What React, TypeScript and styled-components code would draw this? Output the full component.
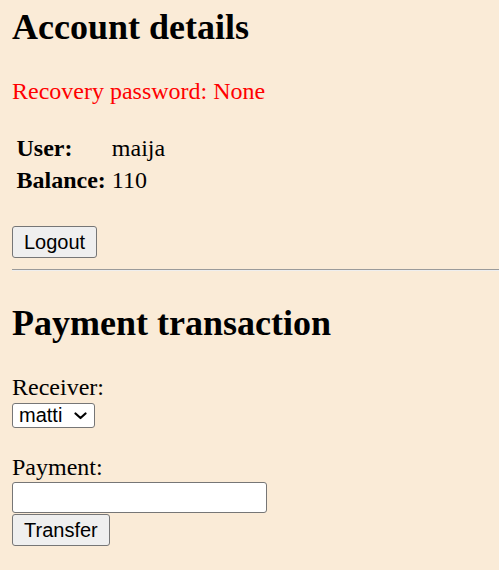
import React from "react";
import styled, { createGlobalStyle } from "styled-components";

const GlobalStyle = createGlobalStyle`
  html, body {
    margin: 0;
    padding: 0;
    background: #faebd7;
  }
  body {
    font-family: "Liberation Serif", "Times New Roman", serif;
    font-size: 24px;
    color: #000;
  }
`;

const Page = styled.div`
  padding: 7px 0 24px 12px;
  display: flex;
  flex-direction: column;
  align-items: stretch;
`;

const Section = styled.section`
  display: flex;
  flex-direction: column;
  align-items: flex-start;
`;

const Title = styled.h1`
  margin: 0 0 30px;
  font-size: 36px;
  line-height: 41px;
  font-weight: bold;
`;

const Warning = styled.p`
  margin: 0 0 25px;
  color: #ff0000;
  font-size: 24px;
  line-height: 27px;
`;

const InfoTable = styled.table`
  border-spacing: 3px;
  margin: 0 0 29px;
  font-size: 24px;
  line-height: 26px;
`;

const Th = styled.th`
  padding: 1.5px;
  text-align: left;
  font-weight: bold;
`;

const Td = styled.td`
  padding: 1.5px;
`;

const Button = styled.button`
  font-family: "Liberation Sans", Arial, sans-serif;
  font-size: 20px;
  line-height: 23px;
  height: 32px;
  padding: 0 11px;
  margin: 0;
  background: #efefef;
  color: #000;
  border: 1px solid #767676;
  border-radius: 3px;
  box-sizing: border-box;
`;

const Divider = styled.hr`
  margin: 11px 0 32px;
  height: 0;
  border: none;
  border-top: 1px solid #9a9a9a;
  border-bottom: 1px solid #eeeeee;
`;

const Form = styled.form`
  display: flex;
  flex-direction: column;
  align-items: flex-start;
`;

const Label = styled.label<{ $gap: number }>`
  font-size: 24px;
  line-height: 27px;
  margin-bottom: ${(p) => p.$gap}px;
`;

const SelectWrap = styled.div`
  position: relative;
  display: inline-flex;
  margin-bottom: 26px;
`;

const Select = styled.select`
  appearance: none;
  -webkit-appearance: none;
  font-family: "Liberation Sans", Arial, sans-serif;
  font-size: 20px;
  width: 83px;
  height: 25px;
  padding: 0 0 0 6px;
  margin: 0;
  background: #ffffff;
  color: #000;
  border: 1px solid #767676;
  border-radius: 3px;
  box-sizing: border-box;
  line-height: 23px;
`;

const Chevron = styled.svg`
  position: absolute;
  right: 8px;
  top: 9px;
  pointer-events: none;
`;

const TextInput = styled.input`
  width: 255px;
  height: 31px;
  box-sizing: border-box;
  margin: 0 0 1px;
  padding: 1px 3px;
  font-family: "Liberation Sans", Arial, sans-serif;
  font-size: 20px;
  background: #fff;
  border: 1px solid #767676;
  border-radius: 3px;
`;

export default function App() {
  return (
    <>
      <GlobalStyle />
      <Page>
        <Section>
          <Title>Account details</Title>
          <Warning>Recovery password: None</Warning>
          <InfoTable>
            <tbody>
              <tr>
                <Th>User:</Th>
                <Td>maija</Td>
              </tr>
              <tr>
                <Th>Balance:</Th>
                <Td>110</Td>
              </tr>
            </tbody>
          </InfoTable>
          <Button type="button">Logout</Button>
        </Section>
        <Divider />
        <Section>
          <Title>Payment transaction</Title>
          <Form onSubmit={(e) => e.preventDefault()}>
            <Label $gap={2} htmlFor="receiver">Receiver:</Label>
            <SelectWrap>
              <Select id="receiver" defaultValue="matti">
                <option value="matti">matti</option>
              </Select>
              <Chevron width="13" height="8" viewBox="0 0 13 8" fill="none">
                <path d="M1.5 1.5 L6.5 6 L11.5 1.5" stroke="#000" strokeWidth="2.2" strokeLinecap="round" strokeLinejoin="round" />
              </Chevron>
            </SelectWrap>
            <Label $gap={1} htmlFor="payment">Payment:</Label>
            <TextInput id="payment" type="text" />
            <Button type="submit">Transfer</Button>
          </Form>
        </Section>
      </Page>
    </>
  );
}
